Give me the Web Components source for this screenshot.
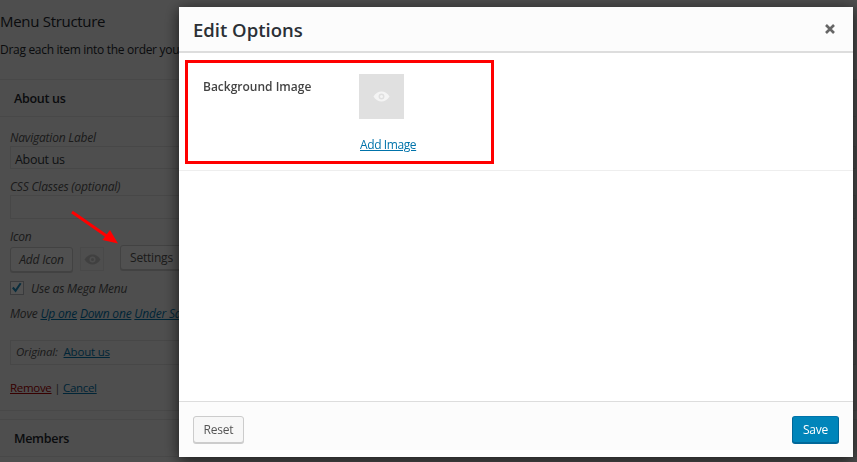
<!DOCTYPE html>
<html>
<head>
<meta charset="utf-8">
<title>Edit Options</title>
<style>
  html, body { margin: 0; height: 100%; overflow: hidden; }
  body { background: #f1f1f1; color: #23282d; font-family: "Open Sans", "Noto Sans", sans-serif; }
</style>
</head>
<body>
<menu-editor></menu-editor>
<edit-modal>
  <option-row label="Background Image"></option-row>
</edit-modal>

<script>
const eyePath = `<path fill-rule="evenodd" d="M0 5.5C2 2 5 .5 8 .5s6 1.500 8 5c-2 3.500-5 5-8 5s-6-1.500-8-5zM8 2.500a3 3 0 1 0 0 6 3 3 0 0 0 0-6zM8 4a1.500 1.500 0 1 1 0 3 1.500 1.500 0 0 1 0-3z"/>`;

// Grey WordPress style button, the label comes in through the slot
class WpButton extends HTMLElement {
  constructor () {
    super();
    const shadow = this.attachShadow({ mode: 'open' });
    shadow.innerHTML = `
    <style>
      :host {
        display: inline-flex;
        align-items: center;
        justify-content: center;
        box-sizing: border-box;
        height: 27px;
        background: #f7f7f7;
        border: 1px solid #ccc;
        border-radius: 3px;
        box-shadow: 0 1px 0 #ccc;
        color: #555;
        font-size: 12px;
      }
      :host([primary]) {
        background: #0085ba;
        border-color: #0073aa #006799 #006799;
        box-shadow: 0 1px 0 #006799;
        color: #fff;
      }
    </style>
    <slot></slot>`;
  }
}
customElements.define('wp-button', WpButton);

// Collapsible panel of the menu list, only the head is always there
class MenuPanel extends HTMLElement {
  constructor () {
    super();
    const shadow = this.attachShadow({ mode: 'open' });
    shadow.innerHTML = `
    <style>
      :host { display: block; border: 1px solid #dfdfdf; border-left: 0; }
      .head { height: 36px; padding-left: 14px; line-height: 37px; font-size: 12.5px; font-weight: 600; letter-spacing: -.3px; }
      .body { display: block; border-top: 1px solid #dfdfdf; }
    </style>
    <div class="head"></div>
    <div class="body"><slot></slot></div>`;
  }

  connectedCallback () {
    this.shadowRoot.querySelector('.head').textContent = this.getAttribute('label');
    if (!this.children.length) this.shadowRoot.querySelector('.body').style.display = 'none';
  }
}
customElements.define('menu-panel', MenuPanel);

// The menu editor page that sits behind the modal
class MenuEditor extends HTMLElement {
  constructor () {
    super();
    const shadow = this.attachShadow({ mode: 'open' });
    shadow.innerHTML = `
    <style>
      :host { display: block; width: 857px; height: 462px; overflow: hidden; font-size: 12px; letter-spacing: -.2px; }
      h3 { margin: 0; padding-top: 10px; font-size: 15px; line-height: 22px; font-weight: 400; letter-spacing: -.3px; }
      .desc { margin: 9px 0 20px; line-height: 18px; letter-spacing: -.3px; }
      .settings { padding: 13px 0 0 10px; height: 293px; box-sizing: border-box; font-style: italic; color: #555; }
      label { display: block; line-height: 16px; }
      .input { box-sizing: border-box; border: 1px solid #ddd; font-style: normal; font-size: 12.5px; line-height: 25px; padding-left: 4px; color: #32373c; margin-bottom: 10px; letter-spacing: -.3px; }
      .icons { display: flex; align-items: flex-start; }
      .add { width: 63px; height: 25px; margin-top: 2px; font-style: italic; }
      .eye { box-sizing: border-box; width: 24px; height: 24px; margin: 2px 0 0 7px; border: 1px solid #e4e4e4; display: flex; align-items: center; justify-content: center; }
      .eye svg { width: 17px; height: 11px; fill: #c8c8c8; }
      .set { width: 90px; height: 25px; margin-left: 16px; font-style: normal; justify-content: flex-start; padding-left: 9px; }
      .mega { display: flex; align-items: center; gap: 7px; margin-top: 9px; height: 14px; }
      .check { box-sizing: border-box; width: 14px; height: 14px; background: #fff; border: 1px solid #b4b9be; display: flex; }
      .check svg { width: 14px; height: 14px; margin: -2px 0 0 -1px; }
      .move { margin-top: 11px; line-height: 16px; white-space: nowrap; }
      a { color: #0073aa; text-decoration: underline; }
      .original { box-sizing: border-box; height: 25px; margin-top: 18px; border: 1px solid #ddd; padding-left: 5px; line-height: 21px; white-space: nowrap; font-size: 11.5px; }
      .original a { font-style: normal; margin-left: 3px; }
      .actions { margin-top: 15px; line-height: 16px; font-style: normal; font-size: 11.5px; letter-spacing: -.3px; }
      .actions .rm { color: #a00; }
      .gap { height: 8px; }
    </style>
    <h3>Menu Structure</h3>
    <p class="desc">Drag each item into the order you prefer.</p>
    <menu-panel label="About us">
      <div class="settings">
        <label>Navigation Label</label>
        <div class="input" style="height:23px">About us</div>
        <label>CSS Classes (optional)</label>
        <div class="input" style="height:24px"></div>
        <label>Icon</label>
        <div class="icons">
          <wp-button class="add">Add Icon</wp-button>
          <div class="eye"><svg viewBox="0 0 16 11">${eyePath}</svg></div>
          <wp-button class="set">Settings</wp-button>
        </div>
        <div class="mega">
          <span class="check"><svg viewBox="0 0 14 14"><path d="M3 7.500l3 3.500 5.500-8" fill="none" stroke="#1e8cbe" stroke-width="2.200"/></svg></span>
          Use as Mega Menu
        </div>
        <div class="move">Move <a>Up one</a> <a>Down one</a> <a>Under Sales</a></div>
        <div class="original">Original: <a>About us</a></div>
        <div class="actions"><a class="rm">Remove</a> | <a>Cancel</a></div>
      </div>
    </menu-panel>
    <div class="gap"></div>
    <menu-panel label="Members"></menu-panel>`;
  }
}
customElements.define('menu-editor', MenuEditor);

// One setting of the modal: label on the left, image picker on the right
class OptionRow extends HTMLElement {
  constructor () {
    super();
    const shadow = this.attachShadow({ mode: 'open' });
    shadow.innerHTML = `
    <style>
      :host { display: grid; grid-template-columns: 156px 1fr; height: 96px; padding: 21px 0 0 24px; border-bottom: 1px solid #eee; }
      .label { font-size: 12px; font-weight: 600; line-height: 26px; color: #444; }
      .thumb { width: 45px; height: 45px; background: #e0e0e0; display: flex; align-items: center; justify-content: center; }
      .thumb svg { width: 17px; height: 11px; fill: #f4f4f4; }
      a { display: inline-block; margin: 17px 0 0 1px; font-size: 12px; line-height: 18px; letter-spacing: -.4px; color: #0073aa; text-decoration: underline; }
    </style>
    <div class="label"></div>
    <div>
      <div class="thumb"><svg viewBox="0 0 16 11">${eyePath}</svg></div>
      <a>Add Image</a>
    </div>`;
  }

  connectedCallback () {
    this.shadowRoot.querySelector('.label').textContent = this.getAttribute('label');
  }
}
customElements.define('option-row', OptionRow);

// Backdrop, dialog and the two red annotations lying over them
class EditModal extends HTMLElement {
  constructor () {
    super();
    const shadow = this.attachShadow({ mode: 'open' });
    shadow.innerHTML = `
    <style>
      :host { position: fixed; inset: 0; display: block; background: rgba(0, 0, 0, .68); }
      .dialog { position: absolute; left: 179px; top: 7px; width: 674px; height: 450px; display: flex; flex-direction: column; background: #fff; box-shadow: 0 3px 14px rgba(0, 0, 0, .7); }
      header { flex: none; box-sizing: border-box; height: 46px; display: flex; align-items: center; justify-content: space-between; padding: 0 18px 0 14px; background: #fcfcfc; border-bottom: 2px solid #ddd; }
      h1 { margin: 0; font-size: 18.5px; font-weight: 600; color: #2b3036; }
      header svg { width: 10px; height: 10px; }
      main { flex: 1; }
      footer { flex: none; box-sizing: border-box; height: 56px; display: flex; align-items: flex-start; justify-content: space-between; padding: 14px 14px 0; background: #fcfcfc; border-top: 1px solid #ddd; }
      wp-button { width: 51px; height: 27px; letter-spacing: -.2px; }
      wp-button[primary] { width: 47px; }
      .mark { position: absolute; left: 185px; top: 60px; width: 309px; height: 104px; box-sizing: border-box; border: 3px solid #f00; }
      .arrow { position: absolute; left: 0; top: 0; width: 200px; height: 300px; }
    </style>
    <div class="dialog">
      <header>
        <h1>Edit Options</h1>
        <svg viewBox="0 0 10 10"><path d="M1 1l8 8M9 1l-8 8" stroke="#666" stroke-width="2.600"/></svg>
      </header>
      <main><slot></slot></main>
      <footer>
        <wp-button>Reset</wp-button>
        <wp-button primary>Save</wp-button>
      </footer>
    </div>
    <div class="mark"></div>
    <svg class="arrow" viewBox="0 0 200 300">
      <path d="M72 212L108 237" stroke="#f00" stroke-width="3" fill="none"/>
      <path d="M118 243.500L102.500 240L110 230z" fill="#f00"/>
    </svg>`;
  }
}
customElements.define('edit-modal', EditModal);
</script>
</body>
</html>
